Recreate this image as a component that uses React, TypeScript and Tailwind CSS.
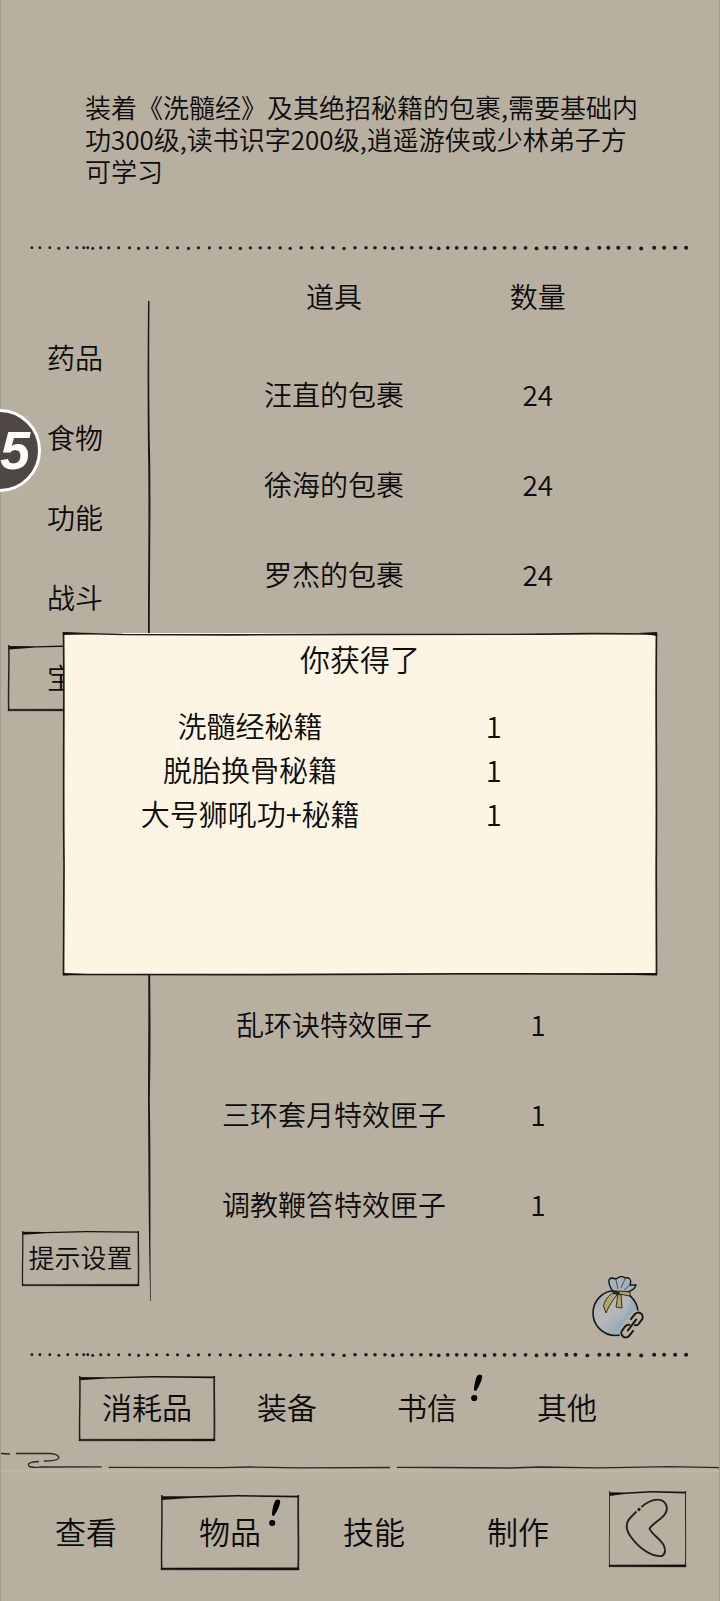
import { ReactNode, useState } from 'react';

interface Item {
  name: string;
  count: number;
}

const CATEGORIES = ['药品', '食物', '功能', '战斗', '宝物'];

const BUNDLES: Item[] = [
  { name: '汪直的包裹', count: 24 },
  { name: '徐海的包裹', count: 24 },
  { name: '罗杰的包裹', count: 24 },
];

const BOXES: Item[] = [
  { name: '乱环诀特效匣子', count: 1 },
  { name: '三环套月特效匣子', count: 1 },
  { name: '调教鞭笞特效匣子', count: 1 },
];

const REWARDS: Item[] = [
  { name: '洗髓经秘籍', count: 1 },
  { name: '脱胎换骨秘籍', count: 1 },
  { name: '大号狮吼功+秘籍', count: 1 },
];

const BAG_TABS = ['消耗品', '装备', '书信', '其他'];
const MAIN_TABS = ['查看', '物品', '技能', '制作'];

// x positions of the ink dots, they get heavier to the right
const DOTS = [
  31, 39, 49, 58, 67, 76, 83, 87, 92, 100, 108, 118, 129, 138, 147, 156, 167, 177, 188, 198, 209,
  220, 230, 240, 250, 260, 269, 280, 290, 301, 312, 322, 333, 344, 355, 366, 375, 385, 393, 402,
  412, 421, 431, 439, 448, 457, 466, 476, 485, 495, 505, 515, 526, 537, 547, 555, 567, 576, 588,
  600, 609, 619, 630, 642, 655, 665, 676, 687,
];

function DottedLine() {
  return (
    <svg className="block h-4 w-full" viewBox="0 0 720 16" preserveAspectRatio="none" aria-hidden="true">
      {DOTS.map((x, i) => (
        <circle key={x} cx={x} cy={i % 5 === 3 ? 8.4 : 7.8} r={1.4 + (x / 720) * 0.7} fill="#1d1b18" />
      ))}
    </svg>
  );
}

// Hand drawn frame, stretched over its parent
function SketchFrame() {
  return (
    <svg
      className="pointer-events-none absolute inset-0 h-full w-full overflow-visible"
      viewBox="0 0 136 66"
      preserveAspectRatio="none"
      aria-hidden="true"
    >
      <path d="M0 1 L28 1.2 L75 0 L136 0.6 L136 2.2 L75 1.4 L28 2.6 L1 4.4 Z" fill="#14120f" />
      <path d="M0.7 0 C1.6 20 0 42 0.7 66" fill="none" stroke="#23211d" strokeWidth="1.5" />
      <path d="M135.3 0 C134.8 20 136 42 135.2 66" fill="none" stroke="#23211d" strokeWidth="1.7" />
      <path d="M0 64.2 L136 64 L136 66 L0 65.8 Z" fill="#14120f" stroke="#14120f" strokeWidth="0.4" />
    </svg>
  );
}

function AlertMark() {
  return (
    <svg width="12" height="28" viewBox="0 0 12 28" role="img" aria-label="新消息">
      <path d="M6.500 1.500 C8 -0.3 11.500 0.3 11.200 3 C10.500 7.500 8 12.500 5.500 16.200 C4.800 17.400 2.900 17 3 15.500 C3.200 11 4.500 4.500 6.500 1.500 Z" fill="#000" />
      <circle cx="3.2" cy="24" r="3.100" fill="#000" />
    </svg>
  );
}

function BagIcon() {
  return (
    <svg width="54" height="64" viewBox="0 0 54 64" aria-hidden="true">
      <defs>
        <linearGradient id="bag" x1="0" y1="0" x2="1" y2="1">
          <stop offset="0" stopColor="#a9afaf" />
          <stop offset="0.45" stopColor="#b6b9ba" />
          <stop offset="1" stopColor="#86a0b0" />
        </linearGradient>
      </defs>
      <circle cx="23.5" cy="37" r="22.5" fill="url(#bag)" stroke="#14181a" strokeWidth="1.6" />
      <path d="M19 53 C30 45 37 36 40 24 C47 35 46 48 31 57 Z" fill="#8ba9bb" opacity="0.5" />
      <path
        d="M21 16 C19 12 16 8 17 4 C18 1 21 2 24 3 C28 0 31 0 33 2 C37 1 40 3 38 9 L44 9 C43 13 39 15 35 16 Z"
        fill="#a4b2b9"
        stroke="#14181a"
        strokeWidth="1.4"
        strokeLinejoin="round"
      />
      <path d="M24 4 L26 13 M33 3 L29 12 M38 9 L32 14" fill="none" stroke="#3a464c" strokeWidth="0.9" />
      <path d="M22 16 C16 20 13 24 11.500 30 L14 37 C17 30 20 25 25 19 Z" fill="#b5a56c" stroke="#262218" strokeWidth="0.9" />
      <path d="M26 18 L24 31 L30 32 L29 19 Z" fill="#b5a56c" stroke="#262218" strokeWidth="0.9" />
      <path d="M27 15 L38 16 L38 20 L27 18 Z" fill="#b5a56c" stroke="#262218" strokeWidth="0.9" />
      <path d="M21 14 L27 15 L27 19 L21 18 Z" fill="#2b2820" />
      <g fill="none" strokeLinecap="round" transform="rotate(38 40 49)">
        <rect x="34" y="34" width="12" height="30" rx="6" fill="#b7b1a2" stroke="#b7b1a2" strokeWidth="3" />
        <g stroke="#191714" strokeWidth="2">
          <path d="M35.500 45 V39 A4.500 4.500 0 0 1 44.500 39 V44 A4.500 4.500 0 0 1 42.500 47.500" />
          <path d="M44.500 53 V59 A4.500 4.500 0 0 1 35.500 59 V54 A4.500 4.500 0 0 1 37.500 50.500" />
          <path d="M40 42 V56" />
        </g>
      </g>
    </svg>
  );
}

function ItemRow({ item }: { item: Item }) {
  return (
    <tr className="h-[90px]">
      <td className="pb-[2px] whitespace-nowrap">{item.name}</td>
      <td className="pb-[2px]">{item.count}</td>
    </tr>
  );
}

interface TabProps {
  active: boolean;
  className: string;
  alert?: ReactNode;
  label: string;
  onClick: () => void;
}

function Tab({ active, className, alert, label, onClick }: TabProps) {
  return (
    <button type="button" onClick={onClick} className={`relative cursor-pointer ${className}`}>
      {active && <SketchFrame />}
      {label}
      {alert}
    </button>
  );
}

export default function App() {
  const [category, setCategory] = useState('宝物');
  const [bagTab, setBagTab] = useState('消耗品');
  const [mainTab, setMainTab] = useState('物品');

  return (
    <div className="relative flex min-h-screen flex-col border-x border-[#a29c8f] bg-[#b7b0a1] font-['Noto_Sans_CJK_SC',sans-serif] font-[350] text-[#0c0b0a]">
      <p className="mt-[91px] mr-[76px] ml-[84px] text-[26px] leading-8">
        装着《洗髓经》及其绝招秘籍的包裹,需要基础内功300级,读书识字200级,逍遥游侠或少林弟子方可学习
      </p>

      <div className="mt-[53px]">
        <DottedLine />
      </div>

      <main className="flex flex-1">
        <aside className="flex w-36 flex-col pt-[69px] pb-[61px] text-[28px]">
          <nav className="flex flex-col gap-[14px] pr-[3px] pl-[7px]">
            {CATEGORIES.map((name) => (
              <Tab
                key={name}
                label={name}
                active={name === category}
                onClick={() => setCategory(name)}
                className="h-[66px] pb-[2px]"
              />
            ))}
          </nav>
          <button
            type="button"
            className="relative mt-auto mr-[6px] ml-[21px] h-[55px] cursor-pointer pb-1 text-[26px] whitespace-nowrap"
          >
            <SketchFrame />
            提示设置
          </button>
        </aside>

        <svg className="mt-[45px] mb-[46px] w-2 self-stretch" viewBox="0 0 8 1000" preserveAspectRatio="none" aria-hidden="true">
          <path
            d="M3 0 L4.500 0 C4 60 4.200 100 5 150 C6 190 5 260 4.800 330 L4.800 640 C5.500 700 6 740 4.800 800 C6 860 5 930 5.800 1000 L5.200 1000 C3.500 930 3.500 870 3 800 C3.200 730 3.600 700 3 640 L3 330 C3 260 4 200 3 150 C2.400 100 2.600 60 3 0 Z"
            fill="#1c1a17"
          />
        </svg>

        <section className="flex flex-1 flex-col">
          <table className="ml-[5%] w-[72%] table-fixed text-center text-[28px]">
            <thead>
              <tr className="h-[94px]">
                <th className="w-3/4 pb-[14px] font-[350]">道具</th>
                <th className="w-1/4 pb-[14px] font-[350]">数量</th>
              </tr>
            </thead>
            <tbody>
              {BUNDLES.map((item) => (
                <ItemRow key={item.name} item={item} />
              ))}
            </tbody>
            <tbody className="before:block before:h-[360px]">
              {BOXES.map((item) => (
                <ItemRow key={item.name} item={item} />
              ))}
            </tbody>
          </table>
          <button type="button" aria-label="包裹" className="mt-[26px] mr-[73px] mb-1 cursor-pointer self-end">
            <BagIcon />
          </button>
        </section>
      </main>

      <DottedLine />

      <nav className="mt-[13px] mr-[82px] ml-[76px] grid grid-cols-4 text-[30px]">
        {BAG_TABS.map((name) => (
          <Tab
            key={name}
            label={name}
            active={name === bagTab}
            onClick={() => setBagTab(name)}
            className="mx-[2px] h-[65px] pb-1"
            alert={
              name === '书信' && (
                <span className="absolute -top-[2px] right-3">
                  <AlertMark />
                </span>
              )
            }
          />
        ))}
      </nav>

      <svg className="mt-[6px] block h-7 w-full" viewBox="0 0 720 28" preserveAspectRatio="none" aria-hidden="true">
        <path d="M0 24 H720" stroke="#bdb7a8" strokeWidth="3" />
        <g fill="none" stroke="#2b2823" strokeWidth="1.3">
          <path d="M0 6.500 L9 7" />
          <path d="M15 6.500 H50 C55 7 58 9 58 11 C57 13 53 14 43 14" />
          <path d="M38 14.500 C30 15 26 16 28 19 C30 21 34 20.500 40 20 L101 19.800" />
          <path d="M108 20.400 L220 20.600 L250 20 L300 20.800 L390 20.500" />
          <path d="M397 20.300 L440 20.500 L510 21 L540 20 L600 20.800 L670 19.600 L720 20.600" />
        </g>
      </svg>

      <nav className="mt-4 flex gap-[19px] pr-[33px] pb-[34px] pl-[13px] text-[31px]">
        <div className="mt-1 grid flex-1 grid-cols-4">
          {MAIN_TABS.map((name) => (
            <Tab
              key={name}
              label={name}
              active={name === mainTab}
              onClick={() => setMainTab(name)}
              className="mx-[3px] h-[75px] pb-[2px]"
              alert={
                name === '物品' && (
                  <span className="absolute top-1 right-[18px]">
                    <AlertMark />
                  </span>
                )
              }
            />
          ))}
        </div>
        <button type="button" aria-label="返回" className="relative h-[76px] w-[77px] cursor-pointer">
          <SketchFrame />
          <svg className="h-full w-full" viewBox="0 0 77 76" fill="none" stroke="#24211d" strokeWidth="1.9" aria-hidden="true">
            <path d="M32.500 16 C38 11 43 8.500 49 8.600 C57 9 60 17 56 23 C52 29 44 32 40.500 37.500 C43 44 52 48 55 55 C56.500 59 56.500 63 53 65 C42 66 30 57 22 46 C16 38 17 31 22 26 L27.500 20.500" />
            <circle cx="30" cy="18.500" r="0.7" />
          </svg>
        </button>
      </nav>

      {/* floating ball docked to the left edge */}
      <div className="absolute top-[409px] -left-[43px] flex h-[83px] w-[83px] items-center justify-end rounded-full border-[3px] border-white bg-[#4f4743] pr-2 font-['Liberation_Sans',sans-serif] text-[54px] font-bold text-white italic">
        5
      </div>

      {/* reward popup */}
      <div className="absolute inset-0 flex items-center px-[62px] pt-[3px]">
        <div role="dialog" aria-labelledby="reward-title" className="relative min-h-[342px] w-full bg-[#fcf5e3] pt-[5px]">
          <svg
            className="pointer-events-none absolute inset-0 h-full w-full overflow-visible"
            viewBox="0 0 594 341"
            preserveAspectRatio="none"
            aria-hidden="true"
          >
            <g fill="none" stroke="#1e1c19" strokeWidth="1.700">
              <path d="M0 0 L60 1.500 L170 1.800 L300 1.400 L480 1.200 L530 0.600 L594 1" />
              <path d="M0.500 -1 C1.500 60 0 150 1 230 L0.500 341" />
              <path d="M593.500 0 C592.500 70 594 150 593.200 230 L593.500 341" />
              <path d="M0 340.500 L200 340.600 L400 339.800 L594 340.200" />
            </g>
            <path d="M0 -1 L35 1 L0 2 Z M575 0 L594 -1 L594 3 Z M520 340 L594 339 L594 341.500 Z M0 339 L25 340 L0 341.500 Z" fill="#14120f" />
          </svg>
          <h2 id="reward-title" className="text-center text-[30px] leading-10">
            你获得了
          </h2>
          <table className="mt-[25px] ml-[11%] w-[82%] table-fixed text-center text-[29px]">
            <tbody>
              {REWARDS.map((item) => (
                <tr key={item.name} className="h-11 leading-10">
                  <td className="whitespace-nowrap">{item.name}</td>
                  <td>{item.count}</td>
                </tr>
              ))}
            </tbody>
          </table>
        </div>
      </div>
    </div>
  );
}
